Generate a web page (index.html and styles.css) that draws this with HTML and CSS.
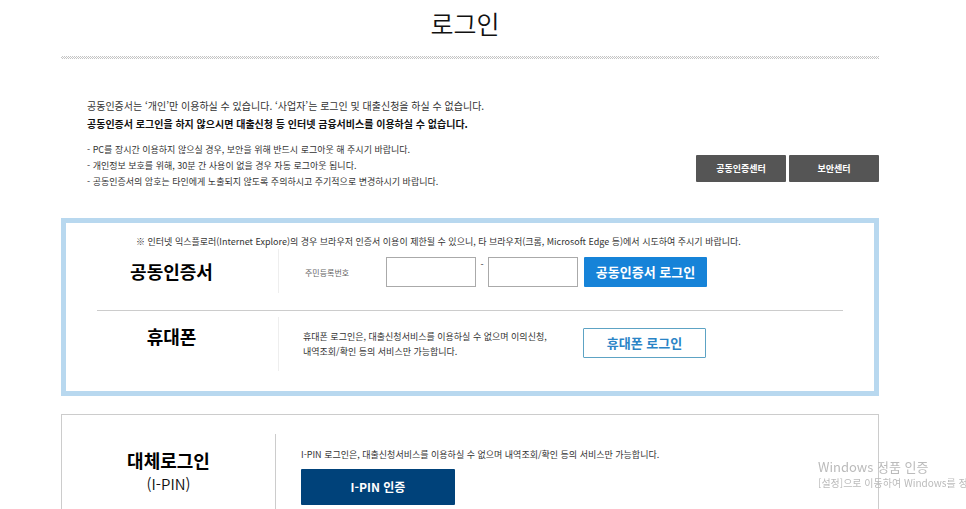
FILE: index.html
```html
<!DOCTYPE html>
<html lang="ko">
<head>
    <meta charset="UTF-8">
    <meta name="viewport" content="width=device-width, initial-scale=1.0">
    <title>로그인</title>
    <link rel="stylesheet" href="styles.css">
</head>
<body>

<header class="page-title">
    <h1>로그인</h1>
</header>

<section class="intro">
    <div class="intro-text">
        <p class="lead">공동인증서는 ‘개인’만 이용하실 수 있습니다. ‘사업자’는 로그인 및 대출신청을 하실 수 없습니다.</p>
        <p class="lead strong">공동인증서 로그인을 하지 않으시면 대출신청 등 인터넷 금융서비스를 이용하실 수 없습니다.</p>
        <ul class="notes">
            <li>- PC를 장시간 이용하지 않으실 경우, 보안을 위해 반드시 로그아웃 해 주시기 바랍니다.</li>
            <li>- 개인정보 보호를 위해, 30분 간 사용이 없을 경우 자동 로그아웃 됩니다.</li>
            <li>- 공동인증서의 암호는 타인에게 노출되지 않도록 주의하시고 주기적으로 변경하시기 바랍니다.</li>
        </ul>
    </div>
    <div class="links">
        <a href="#" class="link-btn">공동인증센터</a>
        <a href="#" class="link-btn">보안센터</a>
    </div>
</section>

<main class="login-box">
    <p class="browser-note">※ 인터넷 익스플로러(Internet Explore)의 경우 브라우저 인증서 이용이 제한될 수 있으니, 타 브라우저(크롬, Microsoft Edge 등)에서 시도하여 주시기 바랍니다.</p>

    <section class="method cert">
        <h2 class="method-name">공동인증서</h2>
        <form class="cert-form">
            <label for="jumin1">주민등록번호</label>
            <input type="text" id="jumin1" maxlength="6">
            <span class="dash">-</span>
            <input type="password" id="jumin2" maxlength="7" aria-label="주민등록번호 뒷자리">
            <button type="button" class="btn btn-blue">공동인증서 로그인</button>
        </form>
    </section>

    <section class="method phone">
        <h2 class="method-name">휴대폰</h2>
        <p class="method-text">휴대폰 로그인은, 대출신청서비스를 이용하실 수 없으며 이의신청,<br>내역조회/확인 등의 서비스만 가능합니다.</p>
        <button type="button" class="btn btn-line">휴대폰 로그인</button>
    </section>
</main>

<section class="alt-box">
    <h2 class="alt-name">대체로그인<span>(I-PIN)</span></h2>
    <div class="alt-content">
        <p>I-PIN 로그인은, 대출신청서비스를 이용하실 수 없으며 내역조회/확인 등의 서비스만 가능합니다.</p>
        <button type="button" class="btn btn-navy">I-PIN 인증</button>
    </div>
</section>

<aside class="activation">
    <strong>Windows 정품 인증</strong>
    <p>[설정]으로 이동하여 Windows를 정</p>
</aside>

</body>
</html>
```

FILE: styles.css
```css
* {
    box-sizing: border-box;
}
body {
    display: flex;
    flex-direction: column;
    min-height: 100vh;
    margin: 0;
    padding: 0 87px 0 61px;
    background: #fff;
    color: #333;
    font-family: "Noto Sans CJK KR", sans-serif;
    font-size: 9px;
    line-height: 15px;
    word-break: keep-all;
}
h1, h2, p, ul {
    margin: 0;
    padding: 0;
}
ul {
    list-style: none;
}
a {
    text-decoration: none;
}

/* title */
.page-title {
    padding: 5px 0 14px;
    text-align: center;
}
.page-title::after {
    content: "";
    display: block;
    height: 3px;
    margin-top: 15px;
    background: repeating-conic-gradient(#c4c4c4 0 25%, #fff 0 50%) 0 0 / 2px 2px;
}
.page-title h1 {
    padding-right: 10px;
    color: #111;
    font-size: 25px;
    font-weight: 350;
    line-height: 36px;
}

/* intro */
.intro {
    display: flex;
    justify-content: space-between;
    align-items: flex-end;
    padding: 24px 0 28px 26px;
}
.lead {
    font-size: 10px;
    line-height: 18px;
}
.lead.strong {
    color: #111;
    font-weight: 700;
}
.notes {
    padding-top: 9px;
    line-height: 16px;
}
.links {
    display: flex;
    gap: 3px;
    padding-bottom: 8px;
}
.link-btn {
    width: 90px;
    border-radius: 1px;
    background: #555;
    color: #fff;
    font-weight: 700;
    line-height: 27px;
    text-align: center;
}

/* certificate and phone login */
.login-box {
    padding: 11px 31px 20px;
    border: 5px solid #b8d8ef;
}
.browser-note {
    padding-left: 39px;
}
.method {
    display: flex;
}
.method-name {
    flex: 0 0 182px;
    padding-right: 32px;
    border-right: 1px solid #eee;
    color: #000;
    font-size: 18px;
    font-weight: 700;
    line-height: 40px;
    text-align: center;
}
.cert {
    padding-bottom: 17px;
    border-bottom: 1px solid #ccc;
}
.cert .method-name {
    padding-top: 2px;
}
.cert-form {
    display: flex;
    align-items: center;
    padding: 8px 0 6px 26px;
}
.cert-form label {
    width: 81px;
    color: #666;
    font-size: 8px;
}
.cert-form input {
    width: 90px;
    height: 30px;
    padding: 0 6px;
    border: 1px solid #aaa;
    border-radius: 0;
    background: #fff;
}
.cert-form .dash {
    align-self: flex-start;
    width: 12px;
    text-align: center;
}
.phone {
    padding-top: 6px;
}
.phone .method-name {
    height: 54px;
    line-height: 38px;
}
.method-text {
    width: 304px;
    padding: 12px 0 0 24px;
}
.btn {
    width: 123px;
    height: 30px;
    padding: 0 0 2px;
    border: 0;
    border-radius: 1px;
    font-family: inherit;
    font-size: 13px;
    font-weight: 700;
    cursor: pointer;
}
.btn-blue {
    margin-left: 6px;
    background: #1683d8;
    color: #fff;
}
.btn-line {
    margin-top: 11px;
    border: 1px solid #5da3c4;
    background: #fff;
    color: #2a84c6;
}

/* i-pin login */
.alt-box {
    display: flex;
    flex: 1;
    margin-top: 18px;
    padding: 19px 0 0;
    border: 1px solid #ccc;
    border-bottom: 0;
}
.alt-name {
    flex: 0 0 214px;
    padding-top: 14px;
    border-right: 1px solid #ccc;
    color: #000;
    font-size: 18px;
    font-weight: 700;
    line-height: 24px;
    text-align: center;
}
.alt-name span {
    display: block;
    color: #111;
    font-size: 15px;
    font-weight: 350;
}
.alt-content {
    padding: 13px 0 4px 25px;
}
.btn-navy {
    display: block;
    width: 154px;
    height: 36px;
    margin-top: 7px;
    background: #00427a;
    color: #fff;
    font-size: 12px;
}

/* activation notice in the corner of the window */
.activation {
    position: fixed;
    right: 0;
    bottom: 19px;
    width: 148px;
    color: #bbb;
    font-size: 10px;
    white-space: nowrap;
}
.activation strong {
    font-size: 13px;
    font-weight: 400;
}
```
